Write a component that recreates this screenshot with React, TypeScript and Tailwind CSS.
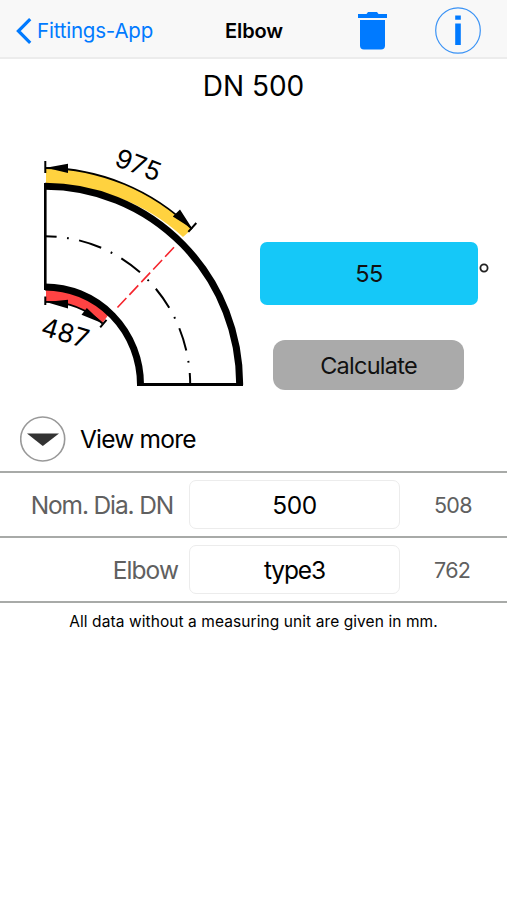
import { useState } from "react";

interface DataRowProps {
  label: string;
  labelClassName: string;
  value: string;
  valueClassName: string;
  result: string;
}

function NavBar() {
  return (
    <header className="flex h-[59px] items-center border-b-2 border-[#ececec] bg-[#f8f8f8] text-[#007aff]">
      <button type="button" className="ml-[16px] flex h-[60px] w-[209px] items-center gap-[5px] pt-[5px]">
        <svg width="16" height="28" viewBox="0 0 16 28" fill="none" className="shrink-0">
          <path d="M14.2 2.2 2.4 14l11.8 11.8" stroke="currentColor" strokeWidth="3.2" />
        </svg>
        <span className="text-[20.5px] leading-none tracking-[-0.2px] whitespace-nowrap">Fittings-App</span>
      </button>
      <h1 className="w-[133px] pt-[5px] text-[20px] leading-none font-semibold tracking-[-0.1px] text-black">Elbow</h1>
      <button type="button" aria-label="Delete" className="mt-[4px] w-[29px]">
        <svg width="29" height="38" viewBox="0 0 29 38" fill="currentColor">
          <path d="M0 2h8.5L10 0h9l1.5 2H29v4H0z" />
          <path d="M2 8h25v25.5a4 4 0 0 1-4 4H6a4 4 0 0 1-4-4z" />
        </svg>
      </button>
      <button type="button" aria-label="Info" className="mt-[3px] ml-[48px]">
        <svg width="46" height="47" viewBox="0 0 46 47">
          <ellipse cx="23" cy="23.5" rx="22.3" ry="22.7" fill="none" stroke="#3b93f5" strokeWidth="1.2" />
          <path d="M20.2 8.5h5.6v4.2h-5.6zM20.2 16.6h5.6V38h-5.6z" fill="currentColor" />
        </svg>
      </button>
    </header>
  );
}

function ElbowDrawing() {
  return (
    <svg width="250" height="260" viewBox="0 135 250 260" fill="none" stroke="#000" className="block shrink-0">
      {/* outer and inner arc lengths */}
      <path d="M46 168A213 217 0 0 1 192 229L183 237A195 198.5 0 0 0 46 186z" fill="#ffd23f" stroke="none" />
      <path d="M46 302A82 83 0 0 1 102.5 323L109 314A95 97.5 0 0 0 46 287z" fill="#ff4343" stroke="none" />

      {/* pipe walls */}
      <path d="M45 186.2A194.7 198.5 0 0 1 239.7 384.7" strokeWidth="7" />
      <path d="M45 287A95.5 97.7 0 0 1 140.5 384.7" strokeWidth="7" />
      <path d="M45.3 183V290" strokeWidth="2.6" />
      <path d="M137 384.5H243" strokeWidth="3.2" />

      {/* centre line */}
      <path
        d="M45 236.2A145.2 148.5 0 0 1 190.2 384.7"
        strokeWidth="2"
        strokeDasharray="23.3 10.5 1.8 10.5"
        strokeDashoffset="11.65"
      />
      <path d="M174 247.3 117.3 307.7" stroke="#f5242c" strokeWidth="1.6" strokeDasharray="13 4.4" />

      {/* dimensions */}
      <path d="M45 168A213 217 0 0 1 192 229" strokeWidth="1.8" />
      <path d="M45.3 161V173M196.3 223 188.3 231.8" strokeWidth="2" />
      <path d="M46 167.8 68 163.7V173zM192.5 229 180 209.5 172.8 216.5z" fill="#000" stroke="none" />
      <path d="M45 302A82 83 0 0 1 102.5 323.5" strokeWidth="1.8" />
      <path d="M45.3 296.5V305M106.5 319.8 100.2 327.3" strokeWidth="2" />
      <path d="M46 302 68 299.7V308.5zM103 323.5 86.8 308 81.5 314.8z" fill="#000" stroke="none" />

      <g fill="#000" stroke="none" fontSize="26" textAnchor="middle">
        <text x="0" y="0" textLength="46.5" transform="translate(135 173.5) rotate(21)">
          975
        </text>
        <text x="0" y="0" textLength="48" transform="translate(62.5 341.5) rotate(17)">
          487
        </text>
      </g>
    </svg>
  );
}

function DataRow({ label, labelClassName, value, valueClassName, result }: DataRowProps) {
  return (
    <div className="flex h-[65px] items-center border-b-2 border-[#a8aaa8] text-[#606060]">
      <div className={`shrink-0 pt-px text-right text-[24.5px] leading-none whitespace-nowrap ${labelClassName}`}>
        {label}
      </div>
      <button
        type="button"
        className="h-[49px] w-[211px] shrink-0 rounded-[7px] border border-[#ececec] bg-white pt-px text-black"
      >
        <span className={valueClassName}>{value}</span>
      </button>
      <span className="ml-[34px] pt-px text-[21.5px] tracking-[-0.7px]">{result}</span>
    </div>
  );
}

export default function App() {
  const [angle, setAngle] = useState("55");

  return (
    <div className="min-h-[900px] w-[507px] overflow-hidden bg-white font-['Inter',sans-serif] text-black">
      <NavBar />
      <h2 className="flex h-[54px] items-center justify-center text-[28px] leading-none">DN 500</h2>

      <main className="flex h-[292px] items-start pt-[22px]">
        <ElbowDrawing />
        <div className="ml-[10px] pt-[107px]">
          <div className="flex">
            <input
              value={angle}
              onChange={(event) => setAngle(event.target.value)}
              aria-label="Angle"
              className="h-[63px] w-[218px] rounded-[7px] bg-[#15c8f8] text-center text-[23.5px] tracking-[-0.5px] text-[#111] outline-none"
            />
            <svg width="12" height="12" viewBox="0 0 12 12" className="mt-[20px] ml-px">
              <circle cx="5" cy="6" r="3.6" fill="none" stroke="#222" strokeWidth="1.8" />
            </svg>
          </div>
          <button
            type="button"
            className="mt-[35px] ml-[13px] block h-[50px] w-[191px] rounded-[12px] bg-[#aaaaaa] pt-px text-[23.5px] tracking-[-0.75px] text-[#111]"
          >
            Calculate
          </button>
        </div>
      </main>

      <button type="button" className="flex h-[66px] w-full items-center pl-[20px]">
        <svg width="46" height="46" viewBox="0 0 46 46" className="mt-[2px]">
          <circle cx="22.7" cy="23" r="22" fill="#fff" stroke="#999" strokeWidth="1.6" />
          <path d="M7 17.5h32L22.8 30z" fill="#333" />
        </svg>
        <span className="ml-[14px] pt-[2px] text-[24.5px] leading-none tracking-[-0.8px]">View more</span>
      </button>

      <section className="border-t-2 border-[#a8aaa8]">
        <DataRow
          label="Nom. Dia. DN"
          labelClassName="w-[189px] pr-[16px] tracking-[-1.15px]"
          value="500"
          valueClassName="text-[24.5px] tracking-[-0.4px]"
          result="508"
        />
        <DataRow
          label="Elbow"
          labelClassName="w-[189px] pr-[11px] tracking-[-0.95px]"
          value="type3"
          valueClassName="text-[24.5px] tracking-[-1.1px]"
          result="762"
        />
      </section>
      <p className="pt-[10px] text-center text-[15.5px] leading-[18px] tracking-[0.08px]">
        All data without a measuring unit are given in mm.
      </p>
    </div>
  );
}
